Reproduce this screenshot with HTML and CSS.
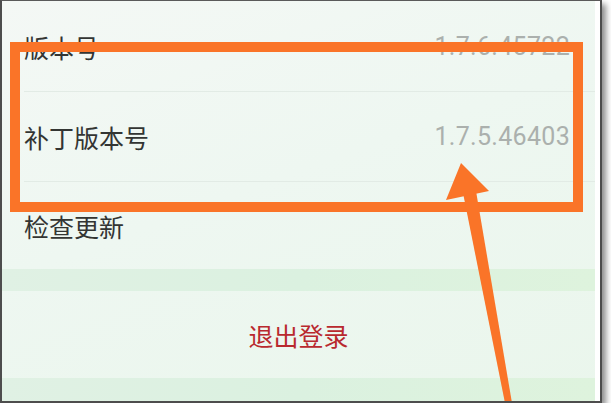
FILE: index.html
```
<!DOCTYPE html>
<html lang="zh-CN">
<head>
<meta charset="UTF-8">
<meta name="viewport" content="width=device-width, initial-scale=1.0">
<title>设置</title>
<link rel="stylesheet" href="styles.css">
</head>
<body>

<div class="frame">
    <div class="screen">
        <div class="list">
            <div class="row">
                <span class="label">版本号</span>
                <span class="value">1.7.6.45722</span>
            </div>
            <div class="row">
                <span class="label">补丁版本号</span>
                <span class="value">1.7.5.46403</span>
            </div>
            <div class="row row-last">
                <span class="label">检查更新</span>
            </div>
        </div>

        <div class="band"></div>

        <div class="logout">退出登录</div>

        <div class="band band-bottom"></div>

        <!-- annotation drawn over the screenshot -->
        <svg class="mark" width="593" height="400" viewBox="0 0 593 400">
            <rect x="13" y="46" width="563" height="160" fill="none" stroke="#fa7428" stroke-width="10"/>
            <polygon points="461,192 474,190 510,402 503,402" fill="#fa7428"/>
            <polygon points="459,162 444,199 487,190" fill="#fa7428"/>
        </svg>
    </div>
</div>

</body>
</html>
```

FILE: styles.css
```
body {
    margin: 0;
    padding: 0;
    background: #ffffff;
    font-family: Roboto, "Noto Sans CJK SC", sans-serif;
}

.frame {
    width: 593px;
    padding-right: 5px;
    background: #ffffff;
    border-left: 2px solid #4d4d4d;
    border-top: 1px solid #5a5a5a;
    border-right: 2px solid #4d4d4d;
    border-bottom: 2px solid #4d4d4d;
    box-shadow: 4px 4px 6px rgba(0, 0, 0, 0.45);
}

.screen {
    position: relative;
    height: 400px;
    display: flex;
    flex-direction: column;
    overflow: hidden;
    background: linear-gradient(160deg, #f4f8f5 0%, #eef7f1 45%, #eaf6ec 100%);
}

.list {
    padding-top: 1px;
}

.row {
    height: 89px;
    display: flex;
    align-items: center;
    justify-content: space-between;
    margin-left: 22px;
    padding-right: 25px;
    border-bottom: 1px solid #e2ebe5;
}

.row-last {
    height: 87px;
    border-bottom: none;
}

.label {
    font-size: 25px;
    color: #333533;
}

.value {
    font-size: 25px;
    letter-spacing: 0.3px;
    color: #abb0ad;
}

.band {
    height: 22px;
    background: linear-gradient(90deg, #e0f1e4 0%, #dbf1e0 50%, #def3dd 100%);
}

.band-bottom {
    flex: 1;
    height: auto;
}

.logout {
    height: 87px;
    display: flex;
    align-items: center;
    justify-content: center;
    font-size: 25px;
    color: #b9292e;
}

.mark {
    position: absolute;
    left: 0;
    top: 0;
}
```
